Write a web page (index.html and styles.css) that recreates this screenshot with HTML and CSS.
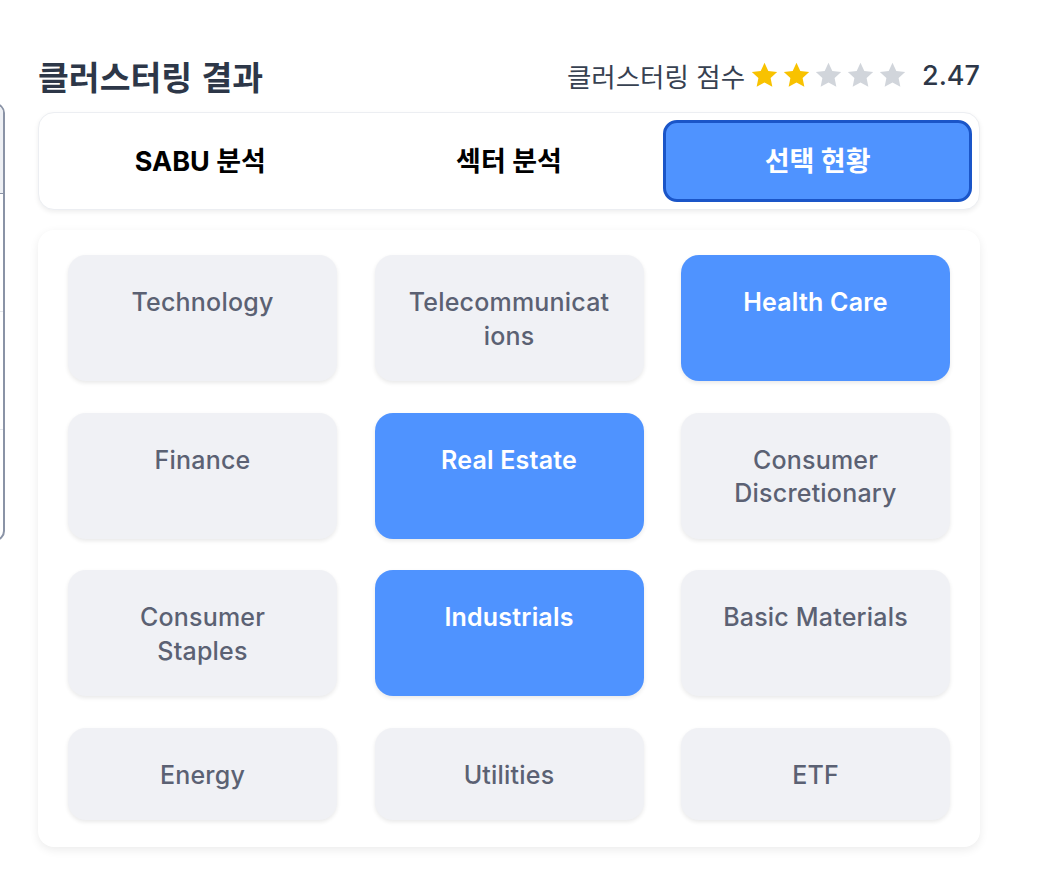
FILE: index.html
```html
<!DOCTYPE html>
<html lang="ko">
<head>
<meta charset="utf-8">
<title>클러스터링 결과</title>
<link rel="stylesheet" href="styles.css">
</head>
<body>
<div class="page">
  <div class="side-table">
    <div class="st-head"></div>
    <div class="st-row"></div>
    <div class="st-row"></div>
    <div class="st-row last"></div>
  </div>
  <main class="main">
    <header class="header">
      <h1 class="title">클러스터링 결과</h1>
      <div class="score">
        <span class="score-label">클러스터링 점수</span>
        <span class="stars">
          <svg class="star on" viewBox="0 0 24 24"><path d="M12 2.2l2.950 6.3 6.85.8-5.08 4.7 1.36 6.8L12 17.4l-6.08 3.4 1.36-6.8L2.2 9.3l6.85-.8z"/></svg>
          <svg class="star on" viewBox="0 0 24 24"><path d="M12 2.2l2.95 6.3 6.85.8-5.08 4.7 1.36 6.8L12 17.4l-6.08 3.4 1.36-6.8L2.2 9.3l6.85-.8z"/></svg>
          <svg class="star" viewBox="0 0 24 24"><path d="M12 2.2l2.95 6.3 6.85.8-5.08 4.7 1.36 6.8L12 17.4l-6.08 3.4 1.36-6.8L2.2 9.3l6.85-.8z"/></svg>
          <svg class="star" viewBox="0 0 24 24"><path d="M12 2.2l2.95 6.3 6.85.8-5.08 4.7 1.36 6.8L12 17.4l-6.08 3.4 1.36-6.8L2.2 9.3l6.85-.8z"/></svg>
          <svg class="star" viewBox="0 0 24 24"><path d="M12 2.2l2.95 6.3 6.85.8-5.08 4.7 1.36 6.8L12 17.4l-6.08 3.4 1.36-6.8L2.2 9.3l6.85-.8z"/></svg>
        </span>
        <span class="score-value">2.47</span>
      </div>
    </header>

    <nav class="tabs">
      <button class="tab">SABU 분석</button>
      <button class="tab">섹터 분석</button>
      <button class="tab active">선택 현황</button>
    </nav>

    <section class="sector-card">
      <div class="sector-grid">
        <div class="sector">Technology</div>
        <div class="sector">Telecommunications</div>
        <div class="sector selected">Health Care</div>
        <div class="sector">Finance</div>
        <div class="sector selected">Real Estate</div>
        <div class="sector">Consumer Discretionary</div>
        <div class="sector">Consumer Staples</div>
        <div class="sector selected">Industrials</div>
        <div class="sector">Basic Materials</div>
        <div class="sector">Energy</div>
        <div class="sector">Utilities</div>
        <div class="sector">ETF</div>
      </div>
    </section>
  </main>
</div>
</body>
</html>
```

FILE: styles.css
```css
* { box-sizing: border-box; }

html, body {
  margin: 0;
  padding: 0;
  background: #ffffff;
}

body {
  font-family: "Inter", "Noto Sans CJK KR", sans-serif;
  color: #2d3748;
  overflow: hidden;
}

.page {
  display: flex;
  align-items: flex-start;
  width: 1042px;
  height: 892px;
}

/* partially visible table on the left edge */
.side-table {
  flex: 0 0 400px;
  margin-left: -395px;
  margin-top: 103px;
  height: 438px;
  border: 2px solid #8a93a6;
  border-radius: 10px;
  overflow: hidden;
  display: flex;
  flex-direction: column;
}
.st-head {
  height: 89px;
  background: #eef0f4;
  border-bottom: 1.5px solid #8a93a6;
}
.st-row {
  height: 118px;
  border-bottom: 1px solid #e3e6eb;
}
.st-row.last { border-bottom: none; flex: 1; }

.main {
  margin-left: 33px;
  width: 942px;
  padding-top: 54px;
}

.header {
  display: flex;
  align-items: center;
  justify-content: space-between;
  height: 42px;
  margin-bottom: 16px;
}

.title {
  margin: 0;
  font-size: 33.5px;
  font-weight: 700;
  color: #2d3748;
  font-family: "Noto Sans CJK KR", sans-serif;
}

.score {
  display: flex;
  align-items: center;
}
.score-label {
  font-family: "Noto Sans CJK KR", sans-serif;
  font-size: 26.5px;
  color: #374151;
  margin-right: 4px;
}
.stars {
  display: flex;
  gap: 1px;
}
.star {
  width: 31px;
  height: 31px;
  fill: #d1d5db;
}
.star.on { fill: #f8c200; }
.score-value {
  margin-left: 14px;
  font-size: 27px;
  font-weight: 500;
  color: #2d3748;
}

.tabs {
  display: grid;
  grid-template-columns: repeat(3, 1fr);
  padding: 7px;
  background: #ffffff;
  border: 1px solid #eceef2;
  border-radius: 16px;
  box-shadow: 0 2px 5px rgba(0, 0, 0, 0.07);
  height: 98px;
}
.tab {
  font-family: "Inter", "Noto Sans CJK KR", sans-serif;
  font-size: 27px;
  font-weight: 700;
  color: #000000;
  background: transparent;
  border: 3px solid transparent;
  border-radius: 14px;
  padding-bottom: 4px;
  cursor: pointer;
}
.tab.active {
  background: #4f93ff;
  border-color: #1a55c8;
  color: #ffffff;
}

.sector-card {
  margin-top: 20px;
  background: #ffffff;
  border-radius: 16px;
  box-shadow: 0 3px 10px rgba(0, 0, 0, 0.08);
  padding: 25px 30px 27px;
}

.sector-grid {
  display: grid;
  grid-template-columns: repeat(3, 1fr);
  column-gap: 37.5px;
  row-gap: 31.5px;
}

.sector {
  background: #f0f1f5;
  border-radius: 18px;
  padding: 31px 33px 28px;
  text-align: center;
  font-size: 25px;
  line-height: 33.5px;
  letter-spacing: 0.2px;
  font-weight: 500;
  color: #5b6173;
  overflow-wrap: anywhere;
  box-shadow: 0 2px 4px rgba(0, 0, 0, 0.09);
}
.sector.selected {
  background: #4f93ff;
  color: #ffffff;
  font-weight: 600;
}
```
